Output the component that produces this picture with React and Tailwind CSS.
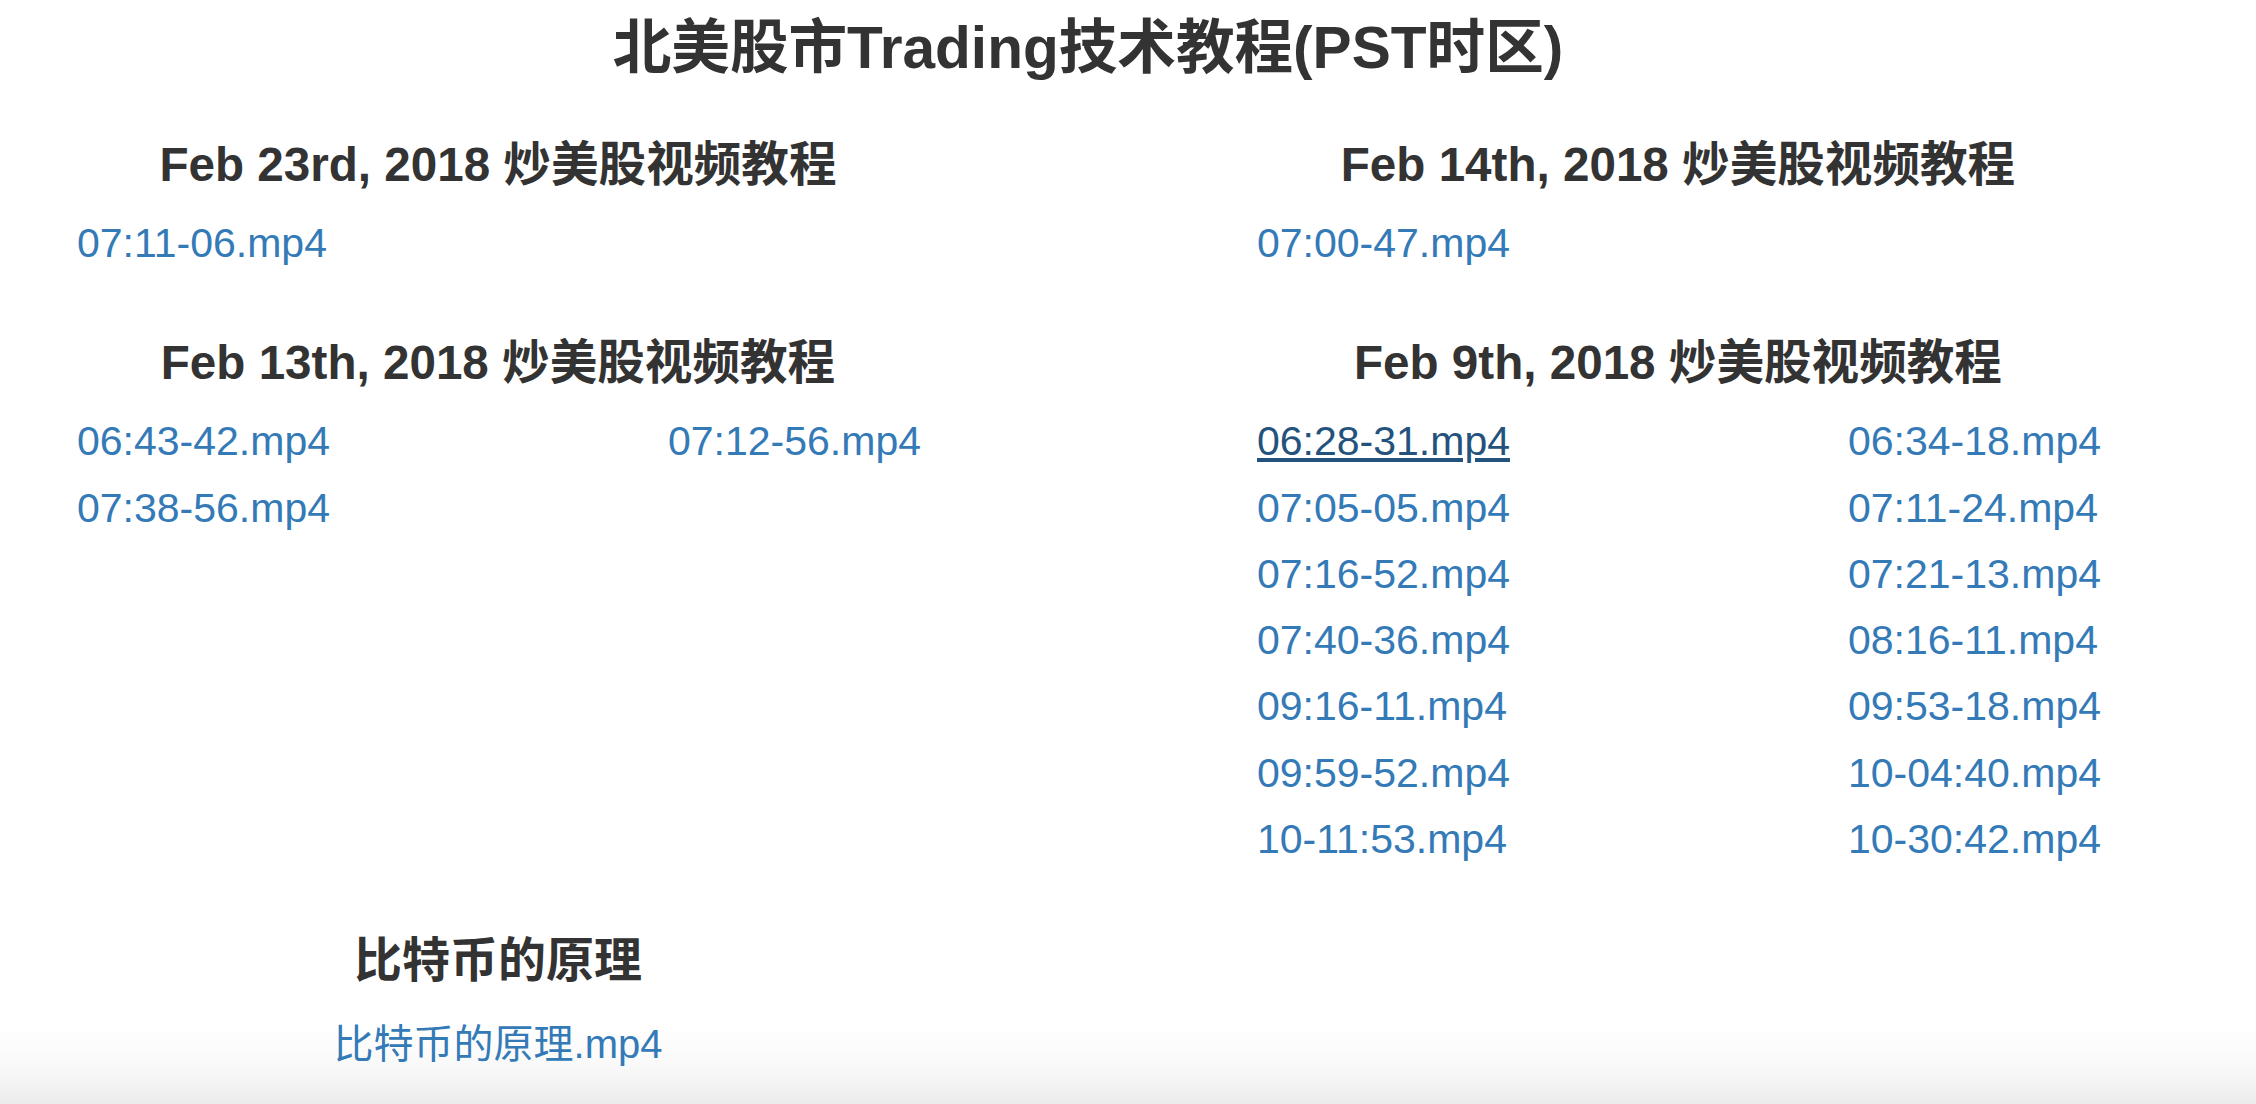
import React from "react";

const FONT = "font-['Liberation_Sans','Noto_Sans_CJK_SC',sans-serif]";

const sections = {
  left: [
    { title: "Feb 23rd, 2018 炒美股视频教程", files: ["07:11-06.mp4"] },
    { title: "Feb 13th, 2018 炒美股视频教程", files: ["06:43-42.mp4", "07:12-56.mp4", "07:38-56.mp4"] },
  ],
  right: [
    { title: "Feb 14th, 2018 炒美股视频教程", files: ["07:00-47.mp4"] },
    {
      title: "Feb 9th, 2018 炒美股视频教程",
      files: [
        "06:28-31.mp4",
        "06:34-18.mp4",
        "07:05-05.mp4",
        "07:11-24.mp4",
        "07:16-52.mp4",
        "07:21-13.mp4",
        "07:40-36.mp4",
        "08:16-11.mp4",
        "09:16-11.mp4",
        "09:53-18.mp4",
        "09:59-52.mp4",
        "10-04:40.mp4",
        "10-11:53.mp4",
        "10-30:42.mp4",
      ],
    },
  ],
};

const FileLink = ({ name, active, size = "text-[41px]" }) => (
  <a
    href="#"
    className={`${size} leading-[66.3px] ${active ? "text-[#23527c] underline" : "text-[#337ab7] no-underline"}`}>
    {name}
  </a>
);

const Section = ({ title, files }) => (
  <div>
    <h3 className="w-[996px] text-center text-[47.6px] leading-[60px] font-bold text-[#333]">{title}</h3>
    <div className="mt-[15px] pl-[77px] grid grid-cols-[591px_max-content]">
      {files.map((f) => (
        <div key={f}>
          <FileLink name={f} active={f === "06:28-31.mp4"} />
        </div>
      ))}
    </div>
  </div>
);

export default function App() {
  return (
    <div
      className={`${FONT} min-h-screen bg-[linear-gradient(to_bottom,#ffffff_1025px,#f8f8f8_1070px,#ebebeb_1104px)] pt-[8px]`}>
      <div className="w-[2176px]">
        <h1 className="text-center text-[58.6px] leading-[80px] font-semibold text-[#333]">北美股市Trading技术教程(PST时区)</h1>

        <div className="mt-[47px] flex">
          <div className="w-[1180px] flex flex-col gap-[57px]">
            {sections.left.map((s) => (
              <Section key={s.title} {...s} />
            ))}
          </div>
          <div className="w-[996px] flex flex-col gap-[57px]">
            {sections.right.map((s) => (
              <Section key={s.title} {...s} />
            ))}
          </div>
        </div>

        {/* 比特币 */}
        <div className="mt-[59px] w-[996px] text-center">
          <h3 className="text-[48px] leading-[60px] font-bold text-[#333]">比特币的原理</h3>
          <div className="mt-[20px]">
            <FileLink name="比特币的原理.mp4" size="text-[40px]" />
          </div>
        </div>
      </div>
    </div>
  );
}
